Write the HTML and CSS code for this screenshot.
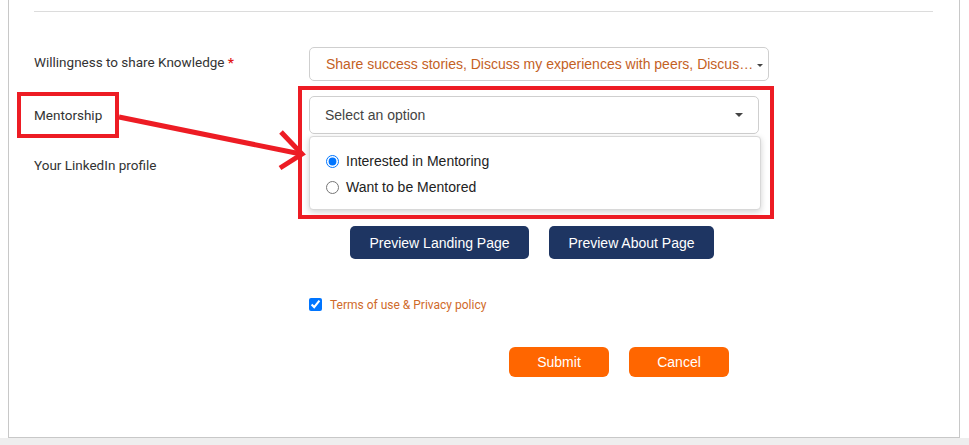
FILE: index.html
```html
<!DOCTYPE html>
<html>
<head>
<meta charset="utf-8">
<link rel="stylesheet" href="styles.css">
</head>
<body>
<div class="panel">
  <div class="rule"></div>

  <div class="row row-knowledge">
    <div class="label">Willingness to share Knowledge <span class="req">*</span></div>
    <div class="control">
      <div class="select select-multi">
        <span class="select-text">Share success stories, Discuss my experiences with peers, Discuss my learnings</span>
        <span class="caret caret-small"></span>
      </div>
    </div>
  </div>

  <div class="row row-mentor">
    <div class="label">Mentorship</div>
    <div class="control">
      <div class="select-wrap">
        <div class="select select-single">
          <span class="placeholder">Select an option</span>
          <span class="caret"></span>
        </div>
        <div class="dropdown">
          <label class="option"><input type="radio" name="m" checked> Interested in Mentoring</label>
          <label class="option"><input type="radio" name="m"> Want to be Mentored</label>
        </div>
      </div>
    </div>
  </div>

  <div class="row row-linkedin">
    <div class="label">Your LinkedIn profile</div>
    <div class="control"></div>
  </div>

  <div class="preview-row">
    <button class="btn btn-navy btn-landing">Preview Landing Page</button>
    <button class="btn btn-navy btn-about">Preview About Page</button>
  </div>

  <div class="terms-row">
    <input type="checkbox" checked>
    <span class="terms">Terms of use &amp; Privacy policy</span>
  </div>

  <div class="submit-row">
    <button class="btn btn-orange">Submit</button>
    <button class="btn btn-orange">Cancel</button>
  </div>

  <svg class="annot" width="951" height="437" viewBox="0 0 951 437">
    <rect x="10" y="94" width="98" height="42" fill="none" stroke="#ed1c24" stroke-width="4"/>
    <rect x="291" y="88" width="472" height="129" fill="none" stroke="#ed1c24" stroke-width="4"/>
    <line x1="110" y1="117" x2="292" y2="154" stroke="#ed1c24" stroke-width="5"/>
    <polyline points="272,132 293,154 271,168" fill="none" stroke="#ed1c24" stroke-width="5"/>
  </svg>
</div>
<div class="footer-bar"></div>
</body>
</html>
```

FILE: styles.css
```css
html, body {
  margin: 0;
  padding: 0;
}
body {
  background: #ffffff;
  width: 969px;
  height: 445px;
  overflow: hidden;
}
.panel {
  position: relative;
  display: flow-root;
  box-sizing: border-box;
  margin-left: 8px;
  width: 952px;
  height: 438px;
  background: #fff;
  border: 1px solid #c8c8c8;
  border-top: none;
  padding: 11px 26px 0 25px;
  font-family: Roboto, "Liberation Sans", sans-serif;
}
.footer-bar {
  height: 7px;
  background: #eeeeee;
}
.rule {
  border-top: 1px solid #dcdcdc;
}
.row {
  display: grid;
  grid-template-columns: 275px 1fr;
  align-items: center;
}
.label {
  font-size: 13.5px;
  color: #333;
}
.req {
  color: #e21b1b;
  font-weight: bold;
}
.row-knowledge {
  margin-top: 35px;
  height: 34px;
}
.row-knowledge .label {
  margin-top: -4px;
}
.row-mentor {
  margin-top: 15px;
  height: 38px;
}
.row-linkedin {
  margin-top: 14px;
  height: 34px;
}
.select {
  box-sizing: border-box;
  border: 1px solid #cfcfcf;
  border-radius: 5px;
  background: #fff;
  display: flex;
  align-items: center;
  font-family: "Liberation Sans", Arial, sans-serif;
  font-size: 14px;
  position: relative;
}
.select-multi {
  width: 460px;
  height: 34px;
  padding-left: 16px;
}
.select-text {
  display: block;
  width: 431px;
  white-space: nowrap;
  overflow: hidden;
  text-overflow: ellipsis;
  color: #c4611f;
}
.caret {
  position: absolute;
  right: 15px;
  top: 50%;
  margin-top: -2px;
  width: 0;
  height: 0;
  border-left: 4px solid transparent;
  border-right: 4px solid transparent;
  border-top: 4px solid #444;
}
.caret-small {
  right: 5px;
  margin-top: 0px;
  border-left-width: 3px;
  border-right-width: 3px;
  border-top-width: 3px;
}
.select-wrap {
  position: relative;
  width: 450px;
}
.select-single {
  width: 450px;
  height: 38px;
  padding-left: 15px;
  color: #444;
}
.dropdown {
  position: absolute;
  left: 0;
  top: 40px;
  box-sizing: border-box;
  width: 452px;
  height: 74px;
  background: #fff;
  border: 1px solid #d8d8d8;
  border-radius: 4px;
  box-shadow: 0 2px 6px rgba(0,0,0,0.18);
  padding-top: 11px;
  padding-left: 16px;
  z-index: 2;
}
.option {
  display: flex;
  align-items: center;
  height: 26px;
  font-family: "Liberation Sans", Arial, sans-serif;
  font-size: 14px;
  color: #222;
}
.option input {
  margin: 0 7px 0 0;
  width: 13px;
  height: 13px;
}
.preview-row {
  display: flex;
  gap: 20px;
  margin-top: 44px;
  padding-left: 316px;
}
.btn {
  border: none;
  color: #fff;
  font-family: "Liberation Sans", Arial, sans-serif;
  font-size: 14px;
  cursor: pointer;
  padding: 0;
}
.btn-navy {
  background: #1e3562;
  height: 33px;
  border-radius: 5px;
}
.btn-landing { width: 179px; }
.btn-about { width: 165px; }
.terms-row {
  display: flex;
  align-items: center;
  margin-top: 37px;
  padding-left: 274px;
  height: 16px;
}
.terms-row input {
  margin: 0 8px 0 1px;
  width: 13px;
  height: 13px;
}
.terms {
  font-size: 12px;
  color: #cf6a2a;
  margin-top: 2px;
}
.submit-row {
  display: flex;
  gap: 20px;
  margin-top: 35px;
  padding-left: 475px;
}
.btn-orange {
  background: #ff6600;
  width: 100px;
  height: 30px;
  border-radius: 6px;
}
.annot {
  position: absolute;
  left: 0;
  top: 0;
  pointer-events: none;
  z-index: 5;
}
```
